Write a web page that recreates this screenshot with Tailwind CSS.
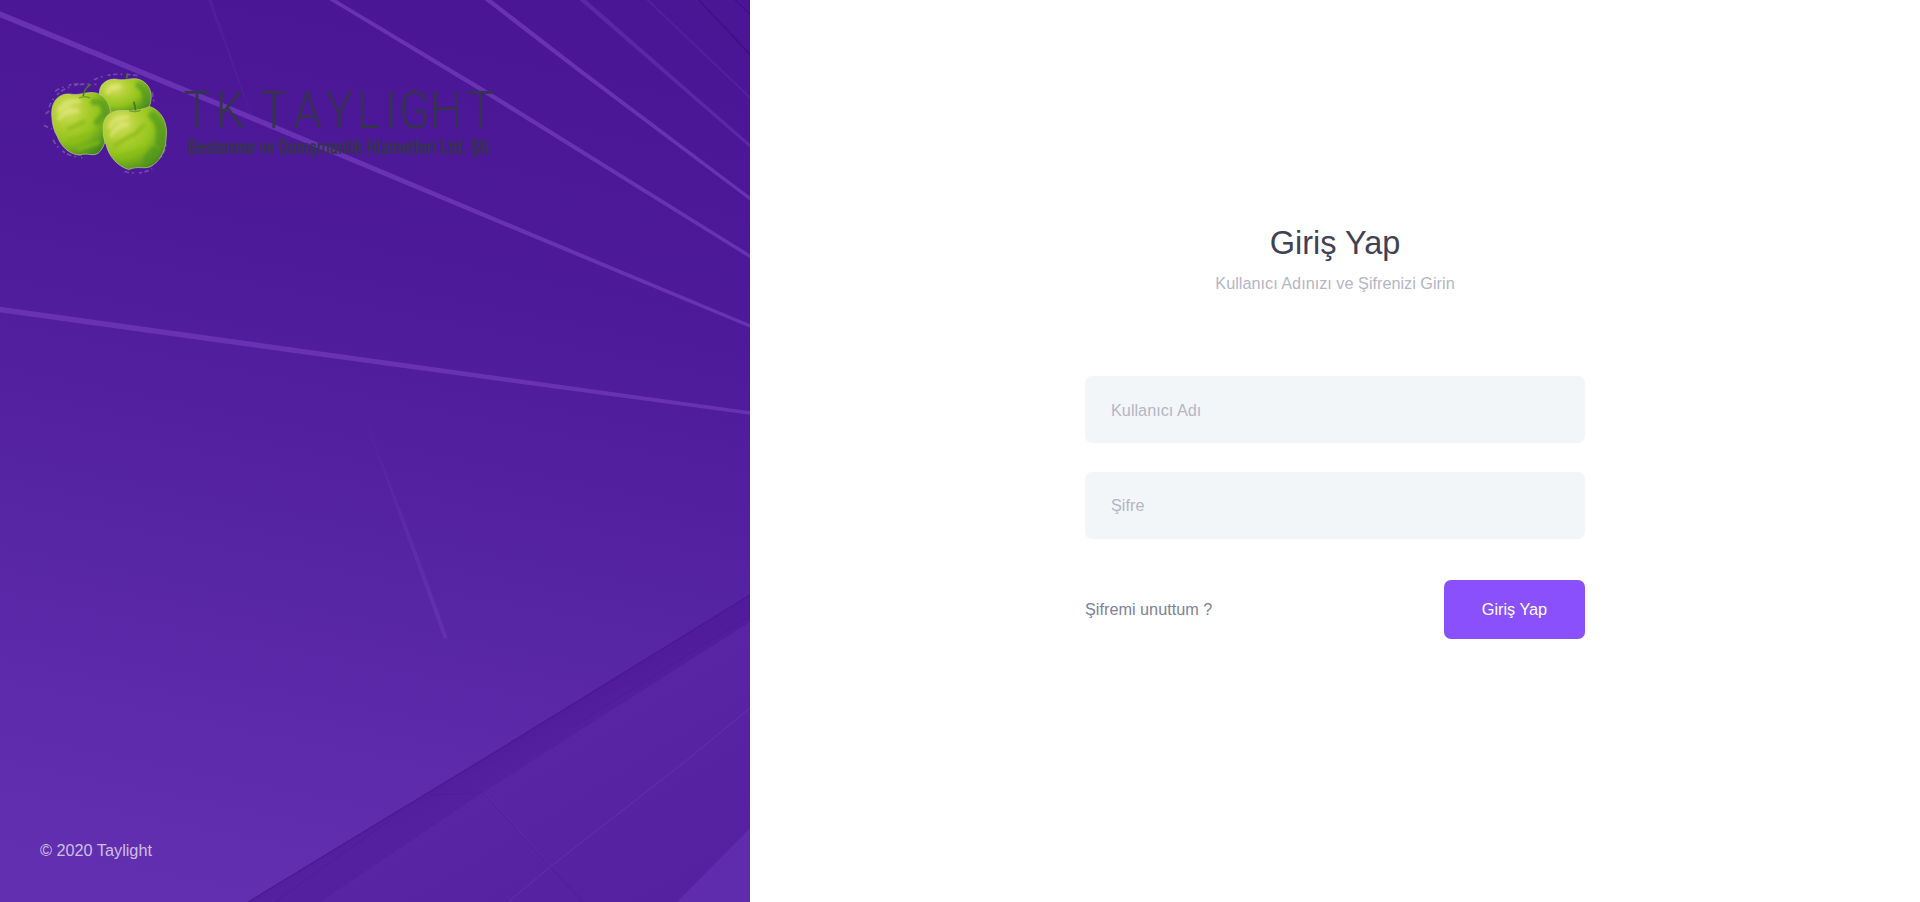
<!DOCTYPE html>
<html lang="tr">
<head>
<meta charset="utf-8">
<title>Taylight | Giriş Yap</title>
<script src="https://cdn.jsdelivr.net/npm/@tailwindcss/browser@4"></script>
</head>
<body class="h-screen overflow-hidden bg-white font-['Liberation_Sans',Arial,sans-serif] text-[16.25px] leading-6">
<div class="flex h-full">
  <aside class="relative flex w-[750px] shrink-0 flex-col justify-between overflow-hidden">
    <svg class="absolute inset-0" width="750" height="902" viewBox="0 0 750 902" aria-hidden="true">
      <defs>
        <linearGradient id="sky" gradientUnits="userSpaceOnUse" x1="420" y1="0" x2="240" y2="902">
          <stop offset="0" stop-color="#4a1696"/><stop offset=".3" stop-color="#4d1a9a"/><stop offset=".62" stop-color="#5625a4"/><stop offset="1" stop-color="#622fb0"/>
        </linearGradient>
        <linearGradient id="wall" x1="0" y1="0" x2="1" y2="1">
          <stop offset="0" stop-color="#5c29a8"/><stop offset=".6" stop-color="#5824a4"/><stop offset="1" stop-color="#54209f"/>
        </linearGradient>
        <linearGradient id="band" gradientUnits="userSpaceOnUse" x1="520" y1="730" x2="534" y2="757">
          <stop offset="0" stop-color="#501c9c"/><stop offset="1" stop-color="#5420a0"/>
        </linearGradient>
        <linearGradient id="fade" x1="0" y1="0" x2="0" y2="1">
          <stop offset="0" stop-color="#7c4cc8" stop-opacity="0"/><stop offset="1" stop-color="#7c4cc8" stop-opacity=".3"/>
        </linearGradient>
        <filter id="soft" x="-5%" y="-5%" width="110%" height="110%"><feGaussianBlur stdDeviation=".7"/></filter>
      </defs>
      <rect width="750" height="902" fill="url(#sky)"/>
      <g filter="url(#soft)" fill="#6933b4">
        <path d="M-2 10.500 Q300 134 500 219.500 L752 325 V328.500 L500 224 Q300 140 -2 16.500Z"/>
        <path d="M-2 306.500 Q300 348.500 500 376.500 L752 411.500 V415 L500 381 Q300 354 -2 312Z"/>
        <path d="M333 -2 L480 86 L752 255.500 V259.500 L480 91 L326 -2Z"/>
        <path d="M489 -2 L577 66 L752 198 V202 L577 71 L482 -2Z"/>
        <path d="M584 -2 L752 145.500 V149.500 L577 -2Z" opacity=".55"/>
        <path d="M647 -2 L752 98 V101 L644 -2Z" opacity=".3"/>
        <path d="M698 -2 L752 55 V58 L696 -2Z" fill="#3c1080" opacity=".8"/>
        <path d="M734 -2 L752 15 V17 L732 -2Z" fill="#3c1080" opacity=".4"/>
        <path d="M207 -2 L260 140 L211 -2Z" opacity=".2"/>
      </g>
      <path d="M350 380 L444 639 L447.500 638 Q425 570 350 380Z" fill="url(#fade)" filter="url(#soft)"/>
      <path d="M248 902 L500 749 L750 595 V902Z" fill="url(#wall)"/>
      <path d="M248 902 L500 749 L750 595 V622 L482 793 L320 902Z" fill="url(#band)"/>
      <path d="M248 902 L500 749 L750 595" fill="none" stroke="#48158f" stroke-width="1.200" opacity=".8"/>
      <path d="M275 902 L390 820 M430 795 L470 793 L482 793 M570 728 L750 616" fill="none" stroke="#48158f" opacity=".3"/>
      <path d="M485 794 L550 867 L583 902" fill="none" stroke="#481891" opacity=".5"/>
      <path d="M486 794 L551 867" fill="none" stroke="#7040b8" opacity=".35"/>
      <path d="M508 902 L550 867 L687 760 L750 708" fill="none" stroke="#7040b8" opacity=".5"/>
      <path d="M677 902 L750 828 V902Z" fill="#5f2cae"/>
    </svg>

    <svg class="relative" width="520" height="200" viewBox="0 0 520 200" role="img" aria-label="TK Taylight">
      <defs>
        <radialGradient id="apple" cx=".28" cy=".26" r=".85">
          <stop offset="0" stop-color="#d6e065"/><stop offset=".3" stop-color="#b3d136"/><stop offset=".6" stop-color="#93c41c"/><stop offset="1" stop-color="#41871a"/>
        </radialGradient>
        <filter id="paint" x="-10%" y="-10%" width="120%" height="120%">
          <feTurbulence type="fractalNoise" baseFrequency=".3" numOctaves="2" seed="4" result="n"/>
          <feDisplacementMap in="SourceGraphic" in2="n" scale="2.500" xChannelSelector="R" yChannelSelector="G"/>
        </filter>
        <filter id="blend" x="-20%" y="-20%" width="140%" height="140%"><feGaussianBlur stdDeviation="4"/></filter>
      </defs>
      <g transform="translate(30.500 60.500) scale(.33333)">
        <g filter="url(#paint)">
          <g fill="none" stroke="#a79bc4" stroke-width="5" opacity=".4" stroke-dasharray="14 9 5 16 9 7">
            <path d="M56 140 Q68 105 100 88 Q140 65 198 72"/>
            <path d="M74 92 Q120 64 165 72 M190 58 Q240 32 325 46 M45 160 L58 150 M40 195 L64 205"/>
            <path d="M68 238 Q90 285 155 292 M355 320 Q405 290 408 245 M282 333 Q330 345 365 325 M365 95 L372 135"/>
          </g>
          <path d="M207 105 C203 72 228 54 257 56 C280 62 302 52 318 55 C350 60 367 91 361 120 C359 154 322 164 280 160 C232 162 209 135 207 105Z" fill="url(#apple)" stroke="#c5d393" stroke-width="2"/>
          <path d="M64 168 C60 119 89 96 122 101 C150 106 171 91 199 98 C237 111 250 155 233 205 C225 245 218 266 203 278 C187 289 169 275 149 284 C115 282 92 257 81 229 C70 211 65 191 64 168Z" fill="url(#apple)" stroke="#c5d393" stroke-width="2"/>
        </g>
        <g fill="none" stroke-linecap="round" filter="url(#blend)">
          <path d="M86 150 Q105 118 145 122 M87 173 Q106 147 140 152 M232 95 Q243 76 266 77" stroke="#e2e782" stroke-width="14" opacity=".6"/>
          <path d="M190 125 Q222 120 224 160 M200 185 L222 160 M325 75 Q350 90 345 122" stroke="#4b951a" stroke-width="20" opacity=".6"/>
          <path d="M115 205 L160 184 M116 240 L173 224 M145 265 L203 246" stroke="#85ba13" stroke-width="12" opacity=".7"/>
        </g>
        <g filter="url(#paint)">
          <path d="M218 206 C217 166 240 150 274 150 C307 151 331 149 358 138 C395 151 413 190 407 232 C405 279 384 305 360 318 C339 327 325 315 295 327 C261 318 234 286 227 253 C220 239 218 223 218 206Z" fill="url(#apple)" stroke="#c5d393" stroke-width="2"/>
        </g>
        <g fill="none" stroke-linecap="round" filter="url(#blend)">
          <path d="M238 200 Q250 170 292 169 M243 225 Q258 192 292 191" stroke="#e2e782" stroke-width="12" opacity=".6"/>
          <path d="M365 165 Q398 195 386 245 M370 270 L350 296" stroke="#4b951a" stroke-width="24" opacity=".6"/>
          <path d="M253 255 L306 223 M266 290 L338 265 M310 225 L340 195" stroke="#85ba13" stroke-width="12" opacity=".7"/>
        </g>
        <path d="M158 106 Q161 88 172 78 L181 71 M315 150 Q314 136 310 124 M288 54 L291 38" fill="none" stroke="#4a7628" stroke-width="5"/>
        <path d="M146 113 Q158 105 179 112 M296 150 Q315 157 330 149" fill="none" stroke="#48851c" stroke-width="4" opacity=".6"/>
      </g>
      <g fill="#34344b">
        <text transform="scale(.87 1)" y="128" x="211 248 299 337 374.500 410 442.500 458.500 494 537" font-family="Roboto, sans-serif" font-weight="300" font-size="52">TKTAYLIGHT</text>
        <text x="188" y="154" font-family="Roboto, sans-serif" font-weight="700" font-size="21" textLength="305" lengthAdjust="spacingAndGlyphs">Beslenme ve Danışmanlık Hizmetleri Ltd. Şti.</text>
      </g>
    </svg>
    <p class="relative mb-10 pl-10 text-white/70">© 2020 Taylight</p>
  </aside>

  <main class="flex flex-1 justify-center">
    <form class="w-[500px] pt-[223px]">
      <h1 class="text-center text-[32.5px] leading-[40px] text-[#3f4254]">Giriş Yap</h1>
      <p class="mt-2 text-center text-[#b5b5c3]">Kullanıcı Adınızı ve Şifrenizi Girin</p>
      <input class="mt-[81px] block h-[67px] w-full rounded-[7px] bg-[#f3f6f9] px-[26px] pt-0.5 outline-none placeholder:text-[#b5b5c3]" type="text" placeholder="Kullanıcı Adı">
      <input class="mt-[29px] block h-[67px] w-full rounded-[7px] bg-[#f3f6f9] px-[26px] outline-none placeholder:text-[#b5b5c3]" type="password" placeholder="Şifre">
      <div class="mt-[41px] flex items-center justify-between">
        <a class="pb-0.5 text-[#7e8299]" href="#">Şifremi unuttum ?</a>
        <button class="h-[59px] w-[141px] rounded-[7px] bg-[#8950fc] pb-0.5 text-white" type="button">Giriş Yap</button>
      </div>
    </form>
  </main>
</div>
</body>
</html>
